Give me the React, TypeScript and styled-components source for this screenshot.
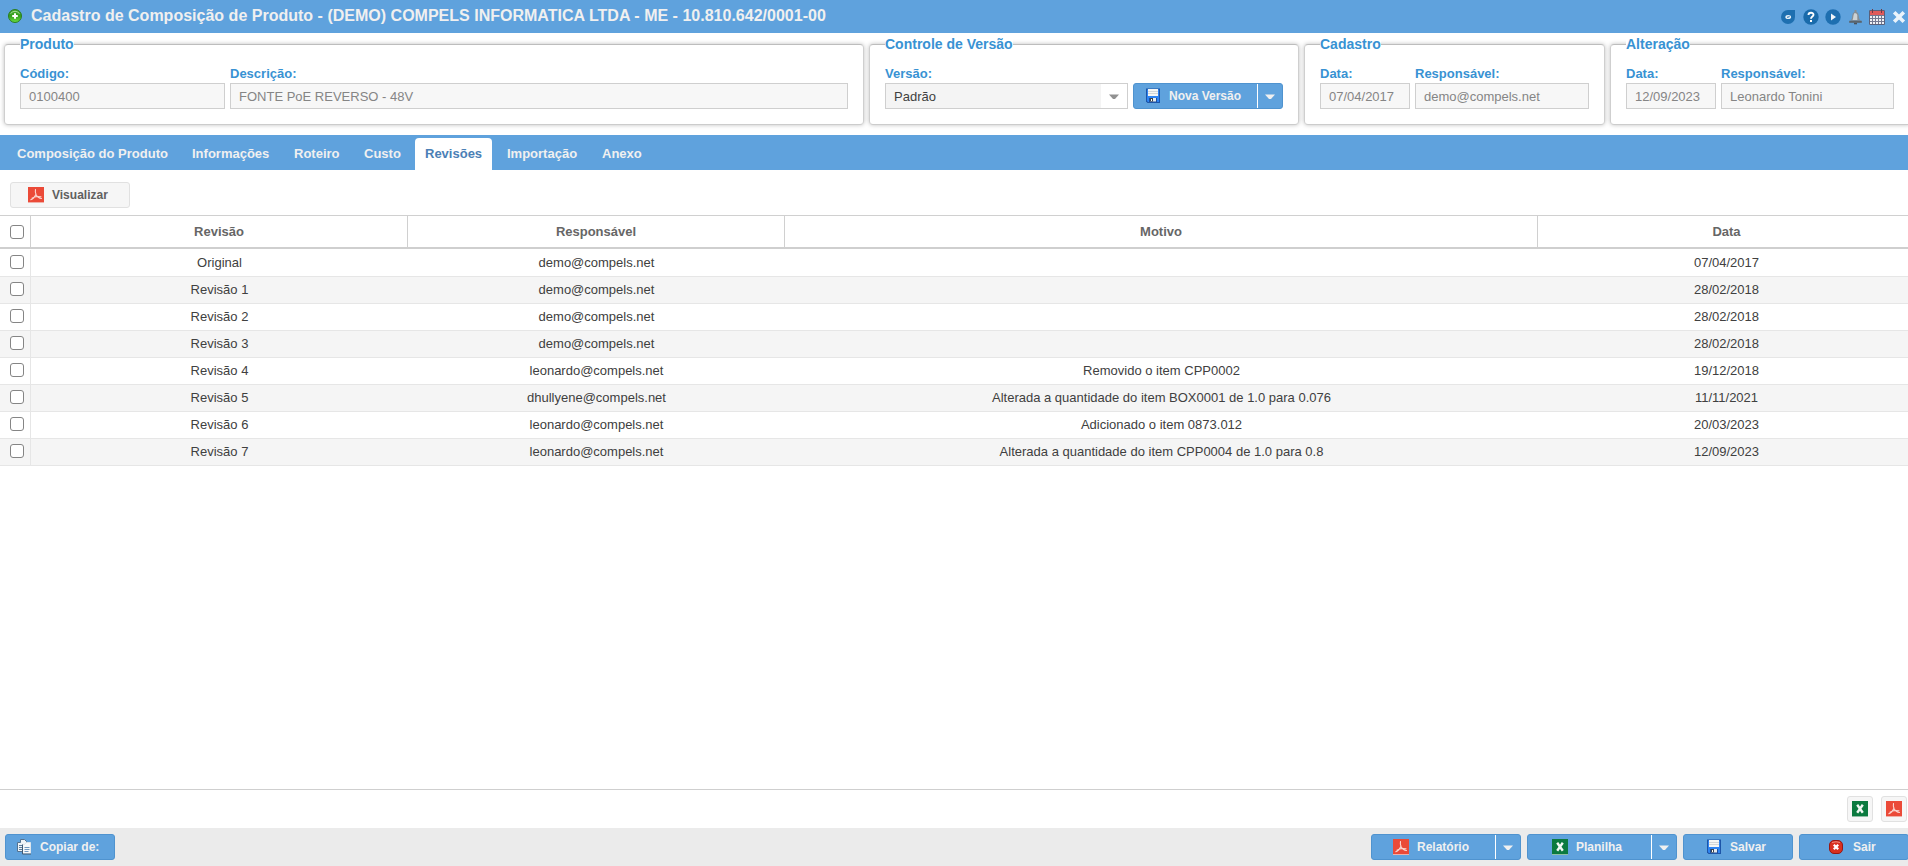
import React from "react";
import styled, { createGlobalStyle, css } from "styled-components";

const BLUE = "#5fa2dd";

const GlobalStyle = createGlobalStyle`
  * { box-sizing: border-box; }
  html, body { margin: 0; padding: 0; overflow: hidden; background: #fff; }
  body, button, input { font-family: "Liberation Sans", Arial, sans-serif; font-size: 13px; color: #404040; }
  svg { display: block; flex: none; }
`;

const Page = styled.div`
  display: flex;
  flex-direction: column;
  width: 100%;
  height: 866px;
  overflow: hidden;
`;

const TitleBar = styled.header`
  display: flex;
  align-items: center;
  height: 33px;
  flex: none;
  padding: 0 2px 2px 7px;
  background: ${BLUE};

  > svg { margin-top: 1px; }
`;

const Title = styled.h1`
  flex: 1;
  margin: 0 0 0 8px;
  font-size: 16px;
  line-height: 20px;
  letter-spacing: 0.01px;
  color: #f0f0f0;
  white-space: nowrap;
`;

const TitleTools = styled.div`
  display: flex;
  align-items: center;
  gap: 6px;
  padding-top: 2px;
`;

const Groups = styled.section`
  display: flex;
  gap: 5px;
  flex: none;
  width: 1915px;
  height: 102px;
  padding: 11px 4px 9px;
`;

const Group = styled.section<{ $w: number }>`
  flex: none;
  width: ${(p) => p.$w}px;
  height: 81px;
  padding: 0 15px;
  border: 1px solid #ccc;
  border-color: #bdbdbd #cfcfcf #cccccc;
  border-radius: 4px;
  box-shadow: 0 0 4px rgba(0, 0, 0, 0.25);
`;

const Legend = styled.h2`
  width: max-content;
  height: 16px;
  margin: -9px 0 10px;
  background: #fff;
  font-size: 14px;
  line-height: 16px;
  color: #3892d3;
`;

const Fields = styled.div`
  display: flex;
  align-items: flex-end;
  gap: 5px;
`;

const Field = styled.label<{ $w: number }>`
  display: block;
  flex: none;
  width: ${(p) => p.$w}px;
`;

const FieldLabel = styled.span`
  display: block;
  height: 21px;
  padding-top: 4px;
  line-height: 15px;
  font-weight: bold;
  color: #3892d3;
`;

const Value = styled.span<{ $select?: boolean }>`
  display: flex;
  align-items: center;
  height: 26px;
  padding: 0 0 0 8px;
  border: 1px solid #cfcfcf;
  background: ${(p) => (p.$select ? "#f4f4f4" : "#f7f7f7")};
  color: ${(p) => (p.$select ? "#404040" : "#858585")};
  white-space: nowrap;
`;

const Trigger = styled.span`
  display: flex;
  align-items: center;
  justify-content: center;
  width: 26px;
  height: 24px;
  margin-left: auto;
  padding-top: 2px;
  background: #fff;
`;

const Button = styled.button<{ $w: number; $plain?: boolean; $left: number; $gap?: number }>`
  display: flex;
  align-items: center;
  flex: none;
  gap: ${(p) => p.$gap ?? 8}px;
  width: ${(p) => p.$w}px;
  height: 26px;
  padding: 0 0 0 ${(p) => p.$left}px;
  border: 1px solid #4f93cf;
  border-radius: 3px;
  background: ${BLUE};
  color: #f0f0f0;
  font-size: 12px;
  font-weight: bold;
  line-height: 14px;
  white-space: nowrap;
  overflow: hidden;
  ${(p) =>
    p.$plain &&
    css`
      border-color: #e1e1e1;
      background: #f6f6f6;
      color: #606060;
    `}
`;

const Split = styled.span`
  display: flex;
  align-items: center;
  justify-content: center;
  width: 25px;
  height: 24px;
  margin-left: auto;
  padding-top: 2px;
  border-left: 1px solid #fff;
`;

const Tabs = styled.nav`
  display: flex;
  align-items: flex-end;
  gap: 4px;
  flex: none;
  height: 35px;
  padding-left: 7px;
  background: ${BLUE};
`;

const Tab = styled.span<{ $active?: boolean; $w: number }>`
  flex: none;
  width: ${(p) => p.$w}px;
  height: 32px;
  margin-right: ${(p) => (p.$active ? 1 : 0)}px;
  padding: 0 0 0 10px;
  border-radius: 4px 4px 0 0;
  background: ${(p) => (p.$active ? "#fff" : "transparent")};
  color: ${(p) => (p.$active ? "#4b80b6" : "#f0f0f0")};
  font-weight: bold;
  line-height: 31px;
  white-space: nowrap;
`;

const Toolbar = styled.div`
  flex: none;
  height: 45px;
  padding: 12px 10px 0;
`;

const Grid = styled.div`
  flex: 1;
  width: 1915px;
  border-top: 1px solid #d0d0d0;
`;

const columns = css`
  display: grid;
  grid-template-columns: 31px 377px 377px 753px 377px;
`;

const HeadRow = styled.div`
  ${columns}
  height: 33px;
  margin-bottom: 1px;
  border-bottom: 2px solid #cfcfcf;
  color: #666;
  font-weight: bold;
  line-height: 31px;
  text-align: center;
`;

const HeadCell = styled.span`
  border-right: 1px solid #d0d0d0;
  &:last-child { border-right: 0; }
`;

const Row = styled.div<{ $alt: boolean }>`
  ${columns}
  height: 27px;
  border-bottom: 1px solid #e6e6e6;
  background: ${(p) => (p.$alt ? "#f5f5f5" : "#fff")};
  line-height: 25px;
  text-align: center;
`;

const Cell = styled.span``;

const CheckCell = styled.span<{ $head?: boolean }>`
  display: flex;
  padding: ${(p) => (p.$head ? 9 : 5)}px 0 0 10px;
  border-right: 1px solid ${(p) => (p.$head ? "#d0d0d0" : "#e6e6e6")};
`;

const Check = styled.span`
  width: 14px;
  height: 14px;
  border: 1px solid #858585;
  border-radius: 3px;
  background: #fff;
`;

const ExportBar = styled.div`
  display: flex;
  flex: none;
  justify-content: flex-end;
  gap: 8px;
  height: 39px;
  padding: 6px 1px 0;
  border-top: 1px solid #cfcfcf;
`;

const ActionBar = styled.footer`
  display: flex;
  flex: none;
  gap: 6px;
  width: 1909px;
  height: 38px;
  padding: 6px 0 0 5px;
  background: #ebebeb;
`;

const Spacer = styled.span`
  flex: 1;
`;

const Caret = ({ color }: { color: string }) => (
  <svg width="10" height="6" viewBox="0 0 10 6">
    <path d="M0 0.5H10L6 5H4Z" fill={color} />
  </svg>
);

const AddIcon = () => (
  <svg width="16" height="16" viewBox="0 0 16 16">
    <defs>
      <linearGradient id="add" x1="0" y1="0" x2="0" y2="1">
        <stop offset="0" stopColor="#43a82e" />
        <stop offset="0.5" stopColor="#35a01f" />
        <stop offset="1" stopColor="#6be043" />
      </linearGradient>
    </defs>
    <circle cx="8" cy="8" r="6.5" fill="url(#add)" stroke="#2a7d20" />
    <path d="M3.5 5.5Q8 1 12.5 5.5" fill="none" stroke="#a5dc98" strokeWidth="1" />
    <path d="M8 5.2v5.6M5.2 8h5.6" stroke="#fff" strokeWidth="2" />
  </svg>
);

const PdfIcon = () => (
  <svg width="16" height="16" viewBox="0 0 16 16">
    <path d="M0 0H16V16H0Z" fill="#eb4a38" />
    <path d="M0 15H16V16H0Z" fill="#f0b0a8" />
    <path
      d="M7.5 2.5C7 4.500 7.5 6 8 7.5C9 9.5 11 11.3 13.5 11.5M8 7C7 9.5 5 12 2.8 12.8M4 11.3C6 9.8 9 9.2 13 9.8"
      fill="none"
      stroke="#fbd5cf"
      strokeWidth="1.1"
      strokeLinecap="round"
    />
  </svg>
);

const ExcelIcon = () => (
  <svg width="16" height="16" viewBox="0 0 16 16">
    <path d="M0 0H16V16H0Z" fill="#0b7a3f" />
    <path d="M0 15H16V16H0Z" fill="#8fbfa5" />
    <path d="M5.2 3.8L10.8 11.7M10.8 3.8L5.2 11.7" stroke="#f2f8f4" strokeWidth="2.4" />
  </svg>
);

const SaveIcon = () => (
  <svg width="16" height="16" viewBox="0 0 16 16">
    <path d="M1 0.5H15V15H2.5L1 13.5Z" fill="#1d55a8" />
    <path d="M2 1.5H14V14H3L2 13Z" fill="#2d83f2" />
    <path d="M3 1H13V8H3Z" fill="#f6f6f4" />
    <path d="M3 3.5H13M3 5.5H13" stroke="#d3d6d8" />
    <path d="M4 10H12V14H4Z" fill="#1c4f9c" />
    <path d="M5 10H11V13.5H5Z" fill="#e4eaee" />
    <path d="M5 10H8V13.5H5Z" fill="#39424c" />
    <path d="M6 11H7V13H6Z" fill="#fff" />
  </svg>
);

const CopyIcon = () => (
  <svg width="16" height="16" viewBox="0 0 16 16">
    <path d="M1.5 3.5H4.5V0.5H8.5L10.5 2.5V12.5H1.5Z" fill="#eef3f7" stroke="#54728f" />
    <path d="M3 6.5h4M3 8.5h3M3 10.5h3" stroke="#5d7f9f" />
    <path d="M6.5 5.5V14.5H14.5V3.5H10.5L8.5 5.5Z" fill="#f5f8fa" stroke="#dce5ed" />
    <path d="M6.500 5.500V15H15" fill="none" stroke="#3f5a75" />
    <path d="M8.5 8.5h5M8.5 10.5h5M8.5 12.5h4" stroke="#6f98bf" />
  </svg>
);

const ExitIcon = () => (
  <svg width="16" height="16" viewBox="0 0 16 16">
    <rect x="1.5" y="1.5" width="13" height="13" rx="4.5" fill="#d9301f" stroke="#981713" />
    <path d="M4 3.5Q8 2 12 3.5" fill="none" stroke="#f18b7e" />
    <path d="M5.8 5.8L10.200 10.200M10.200 5.800L5.800 10.200" stroke="#fff" strokeWidth="2.3" />
  </svg>
);

const ChatIcon = () => (
  <svg width="16" height="16" viewBox="0 0 16 16">
    <path d="M7 1H14V8A7 7 0 1 1 7 1Z" fill="#1e6fb0" />
    <ellipse cx="7.2" cy="8" rx="2.9" ry="2.1" fill="#e8f1f8" />
    <path d="M6 8.3L8.600 7.700" stroke="#1e6fb0" />
  </svg>
);

const HelpIcon = () => (
  <svg width="16" height="16" viewBox="0 0 16 16">
    <circle cx="8" cy="8" r="7.7" fill="#1a6bab" />
    <path d="M5.5 6C5.5 3 10.5 3 10.5 5.8C10.5 7.6 8 7.6 8 9.8" fill="none" stroke="#fff" strokeWidth="1.9" />
    <path d="M7 11h2v2H7Z" fill="#fff" />
  </svg>
);

const PlayIcon = () => (
  <svg width="16" height="16" viewBox="0 0 16 16">
    <circle cx="8" cy="8" r="7.7" fill="#1e6fb0" />
    <path d="M6 4.5L11 8L6 11.5Z" fill="#f2f6fa" />
  </svg>
);

const BellIcon = () => (
  <svg width="16" height="16" viewBox="0 0 16 16">
    <path d="M7.5 1h2v2C11.300 3.600 11.700 5.500 11.900 7.800C12 9.400 12.600 10.800 13.900 11.800H3.100C4.400 10.800 5 9.400 5.100 7.800C5.300 5.500 5.700 3.600 7.500 3Z" fill="#858d94" />
    <path d="M7.600 4C6.200 5 6.600 8.300 5.600 11H10.300V6C10 4.800 9 4 7.600 4Z" fill="#cdd2d5" />
    <path d="M2.200 11.8h12.6v2H2.200Z" fill="#5a646c" />
    <path d="M7 13.8h3v1.5H7Z" fill="#4a535b" />
  </svg>
);

const CalendarIcon = () => (
  <svg width="17" height="16" viewBox="0 0 17 16">
    <path d="M0.5 1.5h15v14h-15Z" fill="#eef0f4" stroke="#59607a" />
    <path d="M1 2h14v4H1Z" fill="#e05a5a" />
    <path d="M3.5 0v4M12.5 0v4" stroke="#6e3a44" />
    <path d="M1 6.5h14M1 9.5h14M1 12.5h14M3.5 6v9M6.5 6v9M9.5 6v9M12.5 6v9" stroke="#737890" />
  </svg>
);

const CloseIcon = () => (
  <svg width="14" height="14" viewBox="0 0 14 14">
    <path d="M2.2 2.2L11.8 11.8M11.8 2.2L2.2 11.8" stroke="#eaf3fb" strokeWidth="3.6" />
  </svg>
);

const tabs = [
  { name: "Composição do Produto", w: 171 },
  { name: "Informações", w: 98 },
  { name: "Roteiro", w: 66 },
  { name: "Custo", w: 57 },
  { name: "Revisões", w: 77 },
  { name: "Importação", w: 91 },
  { name: "Anexo", w: 60 },
];

const revisions = [
  ["Original", "demo@compels.net", "", "07/04/2017"],
  ["Revisão 1", "demo@compels.net", "", "28/02/2018"],
  ["Revisão 2", "demo@compels.net", "", "28/02/2018"],
  ["Revisão 3", "demo@compels.net", "", "28/02/2018"],
  ["Revisão 4", "leonardo@compels.net", "Removido o item CPP0002", "19/12/2018"],
  ["Revisão 5", "dhullyene@compels.net", "Alterada a quantidade do item BOX0001 de 1.0 para 0.076", "11/11/2021"],
  ["Revisão 6", "leonardo@compels.net", "Adicionado o item 0873.012", "20/03/2023"],
  ["Revisão 7", "leonardo@compels.net", "Alterada a quantidade do item CPP0004 de 1.0 para 0.8", "12/09/2023"],
];

const ReadOnlyField = ({ label, value, w }: { label: string; value: string; w: number }) => (
  <Field $w={w}>
    <FieldLabel>{label}</FieldLabel>
    <Value>{value}</Value>
  </Field>
);

export default function App() {
  return (
    <Page>
      <GlobalStyle />
      <TitleBar>
        <AddIcon />
        <Title>Cadastro de Composição de Produto - (DEMO) COMPELS INFORMATICA LTDA - ME - 10.810.642/0001-00</Title>
        <TitleTools>
          <ChatIcon />
          <HelpIcon />
          <PlayIcon />
          <BellIcon />
          <CalendarIcon />
          <CloseIcon />
        </TitleTools>
      </TitleBar>

      <Groups>
        <Group $w={860}>
          <Legend>Produto</Legend>
          <Fields>
            <ReadOnlyField label="Código:" value="0100400" w={205} />
            <ReadOnlyField label="Descrição:" value="FONTE PoE REVERSO - 48V" w={618} />
          </Fields>
        </Group>
        <Group $w={430}>
          <Legend>Controle de Versão</Legend>
          <Fields>
            <Field $w={243}>
              <FieldLabel>Versão:</FieldLabel>
              <Value $select>
                Padrão
                <Trigger>
                  <Caret color="#919191" />
                </Trigger>
              </Value>
            </Field>
            <Button $w={150} $left={11}>
              <SaveIcon />
              Nova Versão
              <Split>
                <Caret color="#f0f0f0" />
              </Split>
            </Button>
          </Fields>
        </Group>
        <Group $w={301}>
          <Legend>Cadastro</Legend>
          <Fields>
            <ReadOnlyField label="Data:" value="07/04/2017" w={90} />
            <ReadOnlyField label="Responsável:" value="demo@compels.net" w={174} />
          </Fields>
        </Group>
        <Group $w={301}>
          <Legend>Alteração</Legend>
          <Fields>
            <ReadOnlyField label="Data:" value="12/09/2023" w={90} />
            <ReadOnlyField label="Responsável:" value="Leonardo Tonini" w={173} />
          </Fields>
        </Group>
      </Groups>

      <Tabs>
        {tabs.map((t) => (
          <Tab key={t.name} $w={t.w} $active={t.name === "Revisões"}>
            {t.name}
          </Tab>
        ))}
      </Tabs>

      <Toolbar>
        <Button $plain $w={120} $left={17}>
          <PdfIcon />
          Visualizar
        </Button>
      </Toolbar>

      <Grid>
        <HeadRow>
          <CheckCell $head>
            <Check />
          </CheckCell>
          <HeadCell>Revisão</HeadCell>
          <HeadCell>Responsável</HeadCell>
          <HeadCell>Motivo</HeadCell>
          <HeadCell>Data</HeadCell>
        </HeadRow>
        {revisions.map((cells, i) => (
          <Row key={cells[0]} $alt={i % 2 === 1}>
            <CheckCell>
              <Check />
            </CheckCell>
            {cells.map((text, c) => (
              <Cell key={c}>{text}</Cell>
            ))}
          </Row>
        ))}
      </Grid>

      <ExportBar>
        <Button $plain $w={26} $left={4}>
          <ExcelIcon />
        </Button>
        <Button $plain $w={26} $left={4}>
          <PdfIcon />
        </Button>
      </ExportBar>

      <ActionBar>
        <Button $w={110} $left={10}>
          <CopyIcon />
          Copiar de:
        </Button>
        <Spacer />
        <Button $w={150} $left={21}>
          <PdfIcon />
          Relatório
          <Split>
            <Caret color="#f0f0f0" />
          </Split>
        </Button>
        <Button $w={150} $left={24}>
          <ExcelIcon />
          Planilha
          <Split>
            <Caret color="#f0f0f0" />
          </Split>
        </Button>
        <Button $w={110} $left={22}>
          <SaveIcon />
          Salvar
        </Button>
        <Button $w={110} $left={28} $gap={9}>
          <ExitIcon />
          Sair
        </Button>
      </ActionBar>
    </Page>
  );
}
